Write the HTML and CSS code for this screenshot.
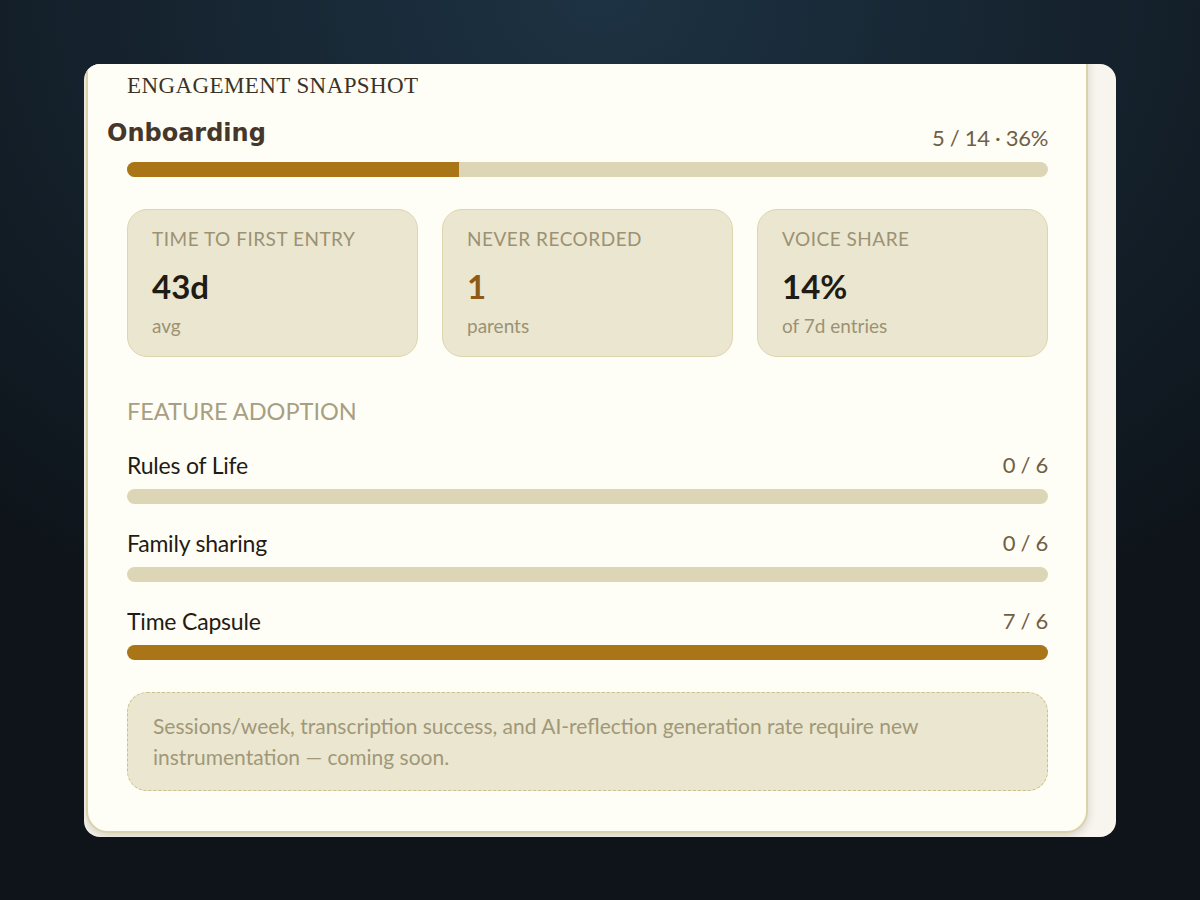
FILE: index.html
```html
<!DOCTYPE html>
<html lang="en">
<head>
    <meta charset="UTF-8">
    <meta name="viewport" content="width=device-width, initial-scale=1.0">
    <title>Engagement Snapshot</title>
    <link rel="stylesheet" href="styles.css">
</head>
<body>
    <div class="frame">
        <section class="panel">
            <h2 class="panel-title">Engagement Snapshot</h2>

            <div class="onboarding-head">
                <h3>Onboarding</h3>
                <span class="count">5 / 14 · 36%</span>
            </div>
            <div class="bar bar-main"><div class="fill" style="width: 36%"></div></div>

            <div class="stats">
                <div class="stat">
                    <div class="stat-label">Time to first entry</div>
                    <div class="stat-value">43d</div>
                    <div class="stat-sub">avg</div>
                </div>
                <div class="stat">
                    <div class="stat-label">Never recorded</div>
                    <div class="stat-value warn">1</div>
                    <div class="stat-sub">parents</div>
                </div>
                <div class="stat">
                    <div class="stat-label">Voice share</div>
                    <div class="stat-value">14%</div>
                    <div class="stat-sub">of 7d entries</div>
                </div>
            </div>

            <h4 class="section-label">Feature adoption</h4>
            <div class="feature">
                <div class="feature-row">
                    <span>Rules of Life</span>
                    <span class="count">0 / 6</span>
                </div>
                <div class="bar"><div class="fill" style="width: 0%"></div></div>
            </div>
            <div class="feature">
                <div class="feature-row">
                    <span>Family sharing</span>
                    <span class="count">0 / 6</span>
                </div>
                <div class="bar"><div class="fill" style="width: 0%"></div></div>
            </div>
            <div class="feature">
                <div class="feature-row">
                    <span>Time Capsule</span>
                    <span class="count">7 / 6</span>
                </div>
                <div class="bar"><div class="fill" style="width: 100%"></div></div>
            </div>

            <div class="note">
                Sessions/week, transcription success, and AI-reflection generation rate require new instrumentation — coming soon.
            </div>
        </section>
    </div>
</body>
</html>
```

FILE: styles.css
```css
html, body {
    height: 100%;
}
body {
    margin: 0;
    display: flex;
    justify-content: center;
    align-items: center;
    font-family: Lato, "Open Sans", sans-serif;
    background: radial-gradient(ellipse 900px 700px at 50% 0%, #1d3243 0%, #15222d 55%, #0e141a 100%);
    background-color: #0e141a;
}
.frame {
    width: 1032px;
    height: 773px;
    overflow: hidden;
    border-radius: 16px;
    background-color: #f7f5ed;
    box-sizing: border-box;
    padding-left: 2px;
}
.panel {
    width: 1002px;
    box-sizing: border-box;
    margin-top: -42px;
    padding: 49px 38px 40px 39px;
    background-color: #fffef6;
    border: 2px solid #d9d2aa;
    border-radius: 22px;
    box-shadow: 0 3px 8px rgba(60, 50, 20, 0.18);
}
.panel-title {
    margin: 0;
    font-family: "Liberation Serif", serif;
    font-weight: normal;
    font-size: 23px;
    line-height: 26px;
    text-transform: uppercase;
    letter-spacing: 0.4px;
    color: #3b3328;
}
.onboarding-head {
    display: flex;
    justify-content: space-between;
    align-items: flex-end;
    margin-top: 19px;
}
.onboarding-head h3 {
    margin: 0 0 0 -20px;
    font-family: "DejaVu Sans", Verdana, sans-serif;
    font-weight: bold;
    font-size: 24px;
    line-height: 30px;
    color: #45372a;
}
.count {
    font-size: 22px;
    line-height: 24px;
    letter-spacing: -0.3px;
    color: #6e6048;
    margin-bottom: -2px;
}
.bar {
    height: 15px;
    border-radius: 8px;
    background-color: #ddd6b6;
    overflow: hidden;
}
.bar .fill {
    height: 100%;
    background-color: #a97517;
}
.bar-main {
    margin-top: 14px;
}
.stats {
    display: grid;
    grid-template-columns: repeat(3, 1fr);
    gap: 24px;
    margin-top: 32px;
}
.stat {
    height: 148px;
    box-sizing: border-box;
    padding: 18px 24px;
    background-color: #ebe6d0;
    border: 1px solid #ddd5ae;
    border-radius: 20px;
}
.stat-label {
    font-size: 19px;
    line-height: 22px;
    letter-spacing: 0.5px;
    text-transform: uppercase;
    color: #9b9274;
}
.stat-value {
    margin-top: 17px;
    font-size: 33px;
    font-weight: bold;
    line-height: 38px;
    color: #1f1b15;
}
.stat-value.warn {
    color: #8d5a18;
}
.stat-sub {
    margin-top: 10px;
    font-size: 19px;
    line-height: 22px;
    color: #9b9274;
}
.section-label {
    margin: 40px 0 0;
    font-size: 23.5px;
    font-weight: normal;
    line-height: 28px;
    text-transform: uppercase;
    color: #a89f82;
}
.feature {
    margin-top: 27px;
}
.feature + .feature {
    margin-top: 26px;
}
.feature-row {
    display: flex;
    justify-content: space-between;
    font-size: 23px;
    line-height: 26px;
    letter-spacing: -0.2px;
    color: #1f1b15;
    margin-bottom: 11px;
}
.feature-row .count {
    margin-bottom: 0;
    font-size: 22px;
    line-height: 26px;
}
.note {
    margin-top: 32px;
    padding: 17px 25px 18px;
    background-color: #ebe6d0;
    border: 1.5px dashed #c9c08e;
    border-radius: 20px;
    font-size: 21px;
    line-height: 31px;
    color: #a09878;
}
```
